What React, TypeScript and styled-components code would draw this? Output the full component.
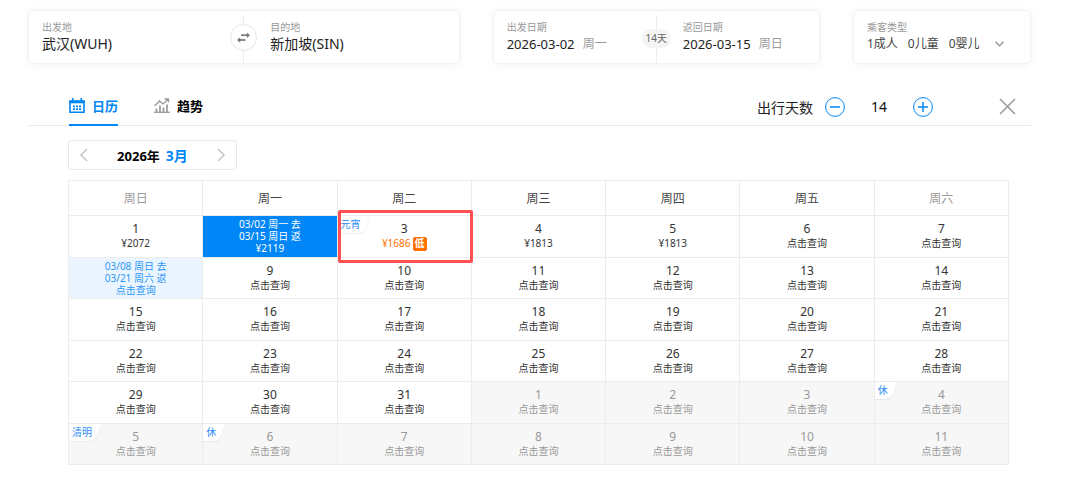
import React, { useState } from "react";
import styled, { createGlobalStyle, css } from "styled-components";

const GlobalStyle = createGlobalStyle`
  * { box-sizing: border-box; }
  body {
    margin: 0;
    background: #fff;
    color: #222;
    font-family: "Noto Sans", "Noto Sans CJK SC", sans-serif;
    font-size: 12px;
  }
  button, input {
    font: inherit;
    color: inherit;
    border: 0;
    padding: 0;
    margin: 0;
    background: none;
  }
  button { cursor: pointer; }
`;

const Page = styled.main`
  padding: 10px 49px 28px 28px;
`;

const SearchBar = styled.form`
  display: flex;
  gap: 33px;
`;

const Card = styled.section<{ $grow: number; $single?: boolean }>`
  display: grid;
  grid-template-columns: ${(p) => (p.$single ? "minmax(0, 1fr)" : "minmax(0, 1fr) 1px minmax(0, 1fr)")};
  flex: ${(p) => p.$grow} 1 0;
  min-width: 0;
  border: 1px solid #f1f1f1;
  border-radius: 5px;
  box-shadow: 0 1px 8px rgba(0, 0, 0, 0.05);
  height: 54px;
`;

const Field = styled.div<{ $second?: boolean }>`
  min-width: 0;
  padding: 8px 0 8px ${(p) => (p.$second ? 26 : 13)}px;
`;

const FieldLabel = styled.label`
  display: block;
  font-size: 10px;
  line-height: 16px;
  color: #999;
`;

const FieldRow = styled.div`
  display: flex;
  align-items: center;
  gap: 5px;
  line-height: 18px;
`;

const FieldInput = styled.input<{ $width: number; $size: number }>`
  display: block;
  width: ${(p) => p.$width}px;
  height: 18px;
  font-size: ${(p) => p.$size}px;
  line-height: 18px;
  outline: 0;
`;

const Weekday = styled.span`
  color: #999;
`;

const Divider = styled.div`
  position: relative;
  margin-top: 4px;
  background: #ececec;
`;

const SwapButton = styled.button`
  position: absolute;
  left: -13px;
  top: 9px;
  width: 27px;
  height: 27px;
  display: flex;
  align-items: center;
  justify-content: center;
  border: 1px solid #e4e4e4;
  border-radius: 50%;
  background: #fff;
`;

const DaysPill = styled.span`
  position: absolute;
  left: -14px;
  top: 14px;
  width: 29px;
  height: 19px;
  border-radius: 10px;
  background: #f4f4f4;
  color: #666;
  font-size: 10px;
  line-height: 19px;
  text-align: center;
`;

const PassengerButton = styled.button`
  display: flex;
  align-items: center;
  gap: 10px;
  line-height: 18px;
  color: #444;
  white-space: nowrap;

  svg { margin-left: 5px; }
`;

const Toolbar = styled.header`
  display: flex;
  justify-content: space-between;
  height: 38px;
  margin-top: 24px;
  padding: 0 15px 0 41px;
  border-bottom: 1px solid #e9e9e9;
`;

const Tabs = styled.div`
  display: flex;
  gap: 36px;
`;

const Tab = styled.button<{ $active: boolean }>`
  display: flex;
  align-items: center;
  gap: 7px;
  height: 38px;
  padding-bottom: 1px;
  font-size: 13px;
  font-weight: 700;
  color: ${(p) => (p.$active ? "#0086f6" : "#000")};
  border-bottom: 2px solid ${(p) => (p.$active ? "#0086f6" : "transparent")};

  svg { color: ${(p) => (p.$active ? "#0086f6" : "#999")}; }
`;

const ToolbarRight = styled.div`
  display: flex;
  align-items: center;
`;

const StepLabel = styled.span`
  margin-right: 12px;
  font-size: 14px;
`;

const StepValue = styled.output`
  width: 68px;
  font-size: 14px;
  text-align: center;
  color: #111;
`;

const IconButton = styled.button`
  display: flex;
`;

const CloseButton = styled(IconButton)`
  margin-left: 66px;
`;

const CalendarBody = styled.section`
  padding: 14px 22px 0 40px;
`;

const MonthPicker = styled.div`
  display: flex;
  align-items: center;
  justify-content: space-between;
  width: 169px;
  height: 30px;
  padding: 0 11px;
  border: 1px solid #e9e9e9;
  border-radius: 3px;
`;

const MonthTitle = styled.strong`
  display: flex;
  align-items: center;
  gap: 6px;
  font-size: 13px;
  color: #000;
`;

const Month = styled.span`
  font-size: 14px;
  color: #0086f6;
`;

const CalendarTable = styled.table`
  width: 100%;
  height: 285px;
  margin-top: 10px;
  table-layout: fixed;
  border-collapse: collapse;
`;

const HeadCell = styled.th<{ $weekend: boolean }>`
  height: 35px;
  padding: 0;
  border: 1px solid #ececec;
  font-weight: 400;
  color: ${(p) => (p.$weekend ? "#999" : "#444")};
`;

type Tone = "plain" | "next" | "selected" | "range";

const tones = {
  plain: css`color: #333;`,
  next: css`background: #f7f7f7; color: #999;`,
  selected: css`background: #0086f6; color: #fff;`,
  range: css`background: #ebf5ff; color: #2d97f7;`,
};

const DayCell = styled.td<{ $tone: Tone }>`
  position: relative;
  height: 41px;
  padding: 0;
  border: 1px solid #ececec;
  ${(p) => tones[p.$tone]}
`;

const DayButton = styled.button`
  display: flex;
  flex-direction: column;
  align-items: center;
  justify-content: center;
  width: 100%;
`;

const DayNumber = styled.span`
  line-height: 15px;
`;

const DayText = styled.span<{ $low?: boolean }>`
  display: flex;
  align-items: center;
  gap: 2px;
  font-size: 10px;
  line-height: 15px;
  ${(p) => p.$low && css`color: #ff6f00;`}
`;

const TripLine = styled.span`
  font-size: 10px;
  line-height: 12px;
`;

const LowBadge = styled.span`
  width: 14px;
  height: 14px;
  border-radius: 2px;
  background: #ff6f00;
  color: #fff;
  font-weight: 700;
  line-height: 13px;
  text-align: center;
`;

const HolidayTag = styled.span`
  position: absolute;
  z-index: 1;
  left: 0;
  top: 0;
  height: 18px;
  padding: 0 9px 0 3px;
  overflow: hidden;
  color: #2d8cf7;
  font-size: 10px;
  line-height: 16px;
  pointer-events: none;

  &::before {
    content: "";
    position: absolute;
    z-index: -1;
    inset: 0 3px 1px -6px;
    border-radius: 0 0 6px 0;
    background: #fff;
    box-shadow: 0 1px 2px rgba(0, 0, 0, 0.08);
    transform: skewX(-18deg);
  }
`;

const Highlight = styled.span`
  position: absolute;
  z-index: 2;
  inset: -6px -2px -6px 0;
  border: 3px solid #ff5054;
  border-radius: 2px;
  pointer-events: none;
`;

const SwapIcon = () => (
  <svg width="15" height="13" viewBox="0 0 15 13" fill="#777" stroke="#777" aria-hidden="true">
    <path d="M5 4.200H12" strokeWidth="1.700" />
    <path d="M10.800 1.500L14 4.200L10.800 6.900Z" stroke="none" />
    <path d="M9.500 9H3" strokeWidth="1.700" />
    <path d="M4.200 6.300L1 9L4.200 11.700Z" stroke="none" />
  </svg>
);

const CalendarIcon = () => (
  <svg width="16" height="16" viewBox="0 0 16 16" fill="none" stroke="currentColor" aria-hidden="true">
    <path d="M1 3H15V14.200H1Z" strokeWidth="1.600" />
    <path d="M0.500 4H15.500" strokeWidth="2.600" />
    <path d="M3.700 0V4M12.300 0V4" strokeWidth="1.600" />
    <path d="M4 8.300H12M4 11.200H12" strokeWidth="1.800" strokeDasharray="2 1" />
  </svg>
);

const TrendIcon = () => (
  <svg width="16" height="16" viewBox="0 0 16 16" fill="none" stroke="currentColor" aria-hidden="true">
    <path d="M0 14.300H16" strokeWidth="1.300" />
    <path d="M2.500 14V10.500M6 14V7.500M9.500 14V9.500M13 14V6.500" strokeWidth="1.700" />
    <path d="M0.500 8L5.500 3L9 6L14 1.500M10.500 1H14.500V4.500" strokeWidth="1.300" />
  </svg>
);

const StepIcon = ({ plus }: { plus?: boolean }) => (
  <svg width="20" height="20" viewBox="0 0 20 20" fill="none" stroke="#0086f6" aria-hidden="true">
    <circle cx="10" cy="10" r="9.400" strokeWidth="1" />
    <path d={plus ? "M5 10H15M10 5V15" : "M5 10H15"} strokeWidth="1.500" />
  </svg>
);

const CloseIcon = () => (
  <svg width="17" height="17" viewBox="0 0 17 17" fill="none" stroke="#999" strokeWidth="1.500" aria-hidden="true">
    <path d="M1 1L16 16M16 1L1 16" />
  </svg>
);

const ArrowIcon = ({ right }: { right?: boolean }) => (
  <svg width="8" height="14" viewBox="0 0 8 14" fill="none" stroke="#c4c4c4" strokeWidth="1.500" aria-hidden="true">
    <path d={right ? "M1 1L7 7L1 13" : "M7 1L1 7L7 13"} />
  </svg>
);

const DownIcon = () => (
  <svg width="9" height="6" viewBox="0 0 9 6" fill="none" stroke="#999" strokeWidth="1.500" aria-hidden="true">
    <path d="M0.500 0.700L4.500 4.700L8.500 0.700" />
  </svg>
);

interface Day {
  n: number;
  next?: boolean;
  price?: string;
  low?: boolean;
  tag?: string;
  marked?: boolean;
  trip?: string[];
  tone?: Tone;
}

const special: Record<string, Partial<Day>> = {
  "3-1": { price: "¥2072" },
  "3-2": { price: "¥2119", trip: ["03/02 周一 去", "03/15 周日 返"], tone: "selected" },
  "3-3": { price: "¥1686", low: true, tag: "元宵", marked: true },
  "3-4": { price: "¥1813" },
  "3-5": { price: "¥1813" },
  "3-8": { trip: ["03/08 周日 去", "03/21 周六 返"], tone: "range" },
  "4-4": { tag: "休" },
  "4-5": { tag: "清明" },
  "4-6": { tag: "休" },
};

const days: Day[] = Array.from({ length: 42 }, (_, i) => {
  const next = i >= 31;
  const n = next ? i - 30 : i + 1;
  return { n, next, ...special[`${next ? 4 : 3}-${n}`] };
});

const weeks = [0, 1, 2, 3, 4, 5].map((w) => days.slice(w * 7, w * 7 + 7));
const weekdays = ["周日", "周一", "周二", "周三", "周四", "周五", "周六"];

const DayContent = ({ day }: { day: Day }) => {
  const text = day.price ?? "点击查询";
  if (day.trip) {
    return (
      <DayButton type="button">
        {day.trip.map((line) => (
          <TripLine key={line}>{line}</TripLine>
        ))}
        <TripLine>{text}</TripLine>
      </DayButton>
    );
  }
  return (
    <DayButton type="button">
      <DayNumber>{day.n}</DayNumber>
      <DayText $low={day.low}>
        {text}
        {day.low && <LowBadge>低</LowBadge>}
      </DayText>
    </DayButton>
  );
};

export default function App() {
  const [tab, setTab] = useState<"calendar" | "trend">("calendar");
  const [count, setCount] = useState(14);

  return (
    <Page lang="zh-CN">
      <GlobalStyle />
      <SearchBar>
        <Card $grow={432}>
          <Field>
            <FieldLabel htmlFor="from">出发地</FieldLabel>
            <FieldInput id="from" $width={150} $size={14} defaultValue="武汉(WUH)" />
          </Field>
          <Divider>
            <SwapButton type="button" aria-label="交换">
              <SwapIcon />
            </SwapButton>
          </Divider>
          <Field $second>
            <FieldLabel htmlFor="to">目的地</FieldLabel>
            <FieldInput id="to" $width={150} $size={14} defaultValue="新加坡(SIN)" />
          </Field>
        </Card>
        <Card $grow={327}>
          <Field>
            <FieldLabel htmlFor="depart">出发日期</FieldLabel>
            <FieldRow>
              <FieldInput id="depart" $width={71} $size={13} defaultValue="2026-03-02" />
              <Weekday>周一</Weekday>
            </FieldRow>
          </Field>
          <Divider>
            <DaysPill>14天</DaysPill>
          </Divider>
          <Field $second>
            <FieldLabel htmlFor="return">返回日期</FieldLabel>
            <FieldRow>
              <FieldInput id="return" $width={71} $size={13} defaultValue="2026-03-15" />
              <Weekday>周日</Weekday>
            </FieldRow>
          </Field>
        </Card>
        <Card $grow={177} $single>
          <Field>
            <FieldLabel htmlFor="passengers">乘客类型</FieldLabel>
            <PassengerButton id="passengers" type="button" aria-haspopup="listbox">
              <span>1成人</span>
              <span>0儿童</span>
              <span>0婴儿</span>
              <DownIcon />
            </PassengerButton>
          </Field>
        </Card>
      </SearchBar>

      <Toolbar>
        <Tabs role="tablist">
          <Tab type="button" role="tab" aria-selected={tab === "calendar"} $active={tab === "calendar"} onClick={() => setTab("calendar")}>
            <CalendarIcon />
            日历
          </Tab>
          <Tab type="button" role="tab" aria-selected={tab === "trend"} $active={tab === "trend"} onClick={() => setTab("trend")}>
            <TrendIcon />
            趋势
          </Tab>
        </Tabs>
        <ToolbarRight>
          <StepLabel>出行天数</StepLabel>
          <IconButton type="button" aria-label="减少" onClick={() => setCount(Math.max(1, count - 1))}>
            <StepIcon />
          </IconButton>
          <StepValue>{count}</StepValue>
          <IconButton type="button" aria-label="增加" onClick={() => setCount(count + 1)}>
            <StepIcon plus />
          </IconButton>
          <CloseButton type="button" aria-label="关闭">
            <CloseIcon />
          </CloseButton>
        </ToolbarRight>
      </Toolbar>

      <CalendarBody>
        <MonthPicker>
          <IconButton type="button" aria-label="上个月">
            <ArrowIcon />
          </IconButton>
          <MonthTitle>
            2026年 <Month>3月</Month>
          </MonthTitle>
          <IconButton type="button" aria-label="下个月">
            <ArrowIcon right />
          </IconButton>
        </MonthPicker>
        <CalendarTable>
          <thead>
            <tr>
              {weekdays.map((name, i) => (
                <HeadCell key={name} scope="col" $weekend={i === 0 || i === 6}>
                  {name}
                </HeadCell>
              ))}
            </tr>
          </thead>
          <tbody>
            {weeks.map((week, w) => (
              <tr key={w}>
                {week.map((day) => (
                  <DayCell key={day.n} $tone={day.tone ?? (day.next ? "next" : "plain")}>
                    {day.tag && <HolidayTag>{day.tag}</HolidayTag>}
                    <DayContent day={day} />
                    {day.marked && <Highlight />}
                  </DayCell>
                ))}
              </tr>
            ))}
          </tbody>
        </CalendarTable>
      </CalendarBody>
    </Page>
  );
}
